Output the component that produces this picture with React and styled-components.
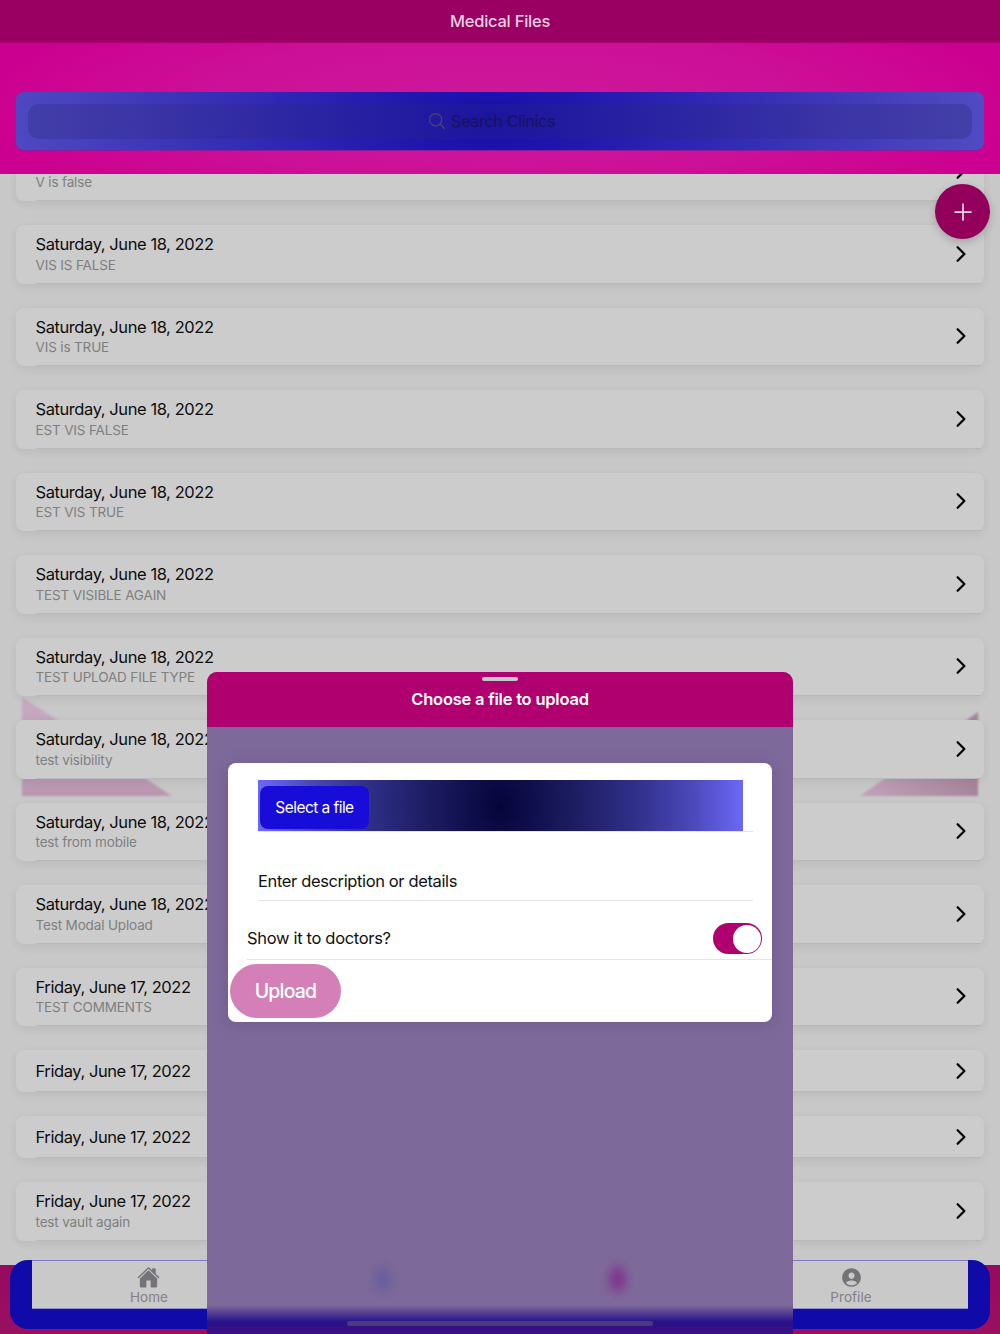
import React from 'react'
import styled, { createGlobalStyle } from 'styled-components'
import { IoChevronForward, IoHome, IoPersonCircle, IoSearchOutline, IoAdd } from 'react-icons/io5'

const GlobalStyle = createGlobalStyle`
  html, body {
    margin: 0;
    padding: 0;
    background: #cbcbcb;
  }
  * {
    box-sizing: border-box;
  }
`

const Page = styled.div`
  position: relative;
  display: flex;
  flex-direction: column;
  width: 1000px;
  height: 1334px;
  overflow: hidden;
  background: #c8c8c8;
  font-family: Inter, "Liberation Sans", sans-serif;
`

const TopBar = styled.div`
  flex: none;
  display: flex;
  align-items: center;
  justify-content: center;
  height: 43px;
  background: #990062;
  border-bottom: 1px solid #a8006c;
  color: #e8cfe0;
  font-size: 16.5px;
  font-weight: 500;
  letter-spacing: -0.25px;
`

const SearchArea = styled.div`
  flex: none;
  position: relative;
  z-index: 2;
  height: 131px;
  padding: 49px 16px 0;
  background: radial-gradient(ellipse 520px 130px at 50% 50%, #cc1a9c 0%, #cc0f97 60%, #cc0090 100%);
`

const SearchBar = styled.div`
  height: 59px;
  padding: 12px;
  border-radius: 8px;
  background: radial-gradient(ellipse 500px 300px at 49% 50%, #160da9 0%, #2a22b2 35%, #3f39b9 70%, #504cc2 100%);
  border-bottom: 1px solid #8a1aa0;
`

const SearchInput = styled.div`
  display: flex;
  align-items: center;
  justify-content: center;
  gap: 4px;
  height: 35px;
  padding: 0 18px 2px 0;
  border-radius: 10px;
  background: radial-gradient(ellipse 490px 300px at 49% 50%, #1c149e 0%, #2a23a2 35%, #3a34a6 70%, #4440a8 100%);
  color: #17125f;
  font-size: 16.5px;
  letter-spacing: -0.5px;

  svg {
    color: #46466f;
    font-size: 20px;
  }
`

const List = styled.div`
  flex: 1;
  position: relative;
  min-height: 0;
  display: flex;
  flex-direction: column;
  gap: 24px;
  padding: 0 16px;
`

const Backdrop = styled.svg`
  position: absolute;
  left: 0;
  top: 0;
  width: 1000px;
  height: 640px;
  filter: blur(0.8px);
`

const Row = styled.div`
  flex: none;
  position: relative;
  display: flex;
  align-items: center;
  justify-content: space-between;
  height: ${p => (p.$sub ? 58.5 : 42)}px;
  padding: 0 11px 1px 19.5px;
  border-radius: 8px;
  background: #cccccc;
  box-shadow: 0 3px 10px rgba(0, 0, 0, 0.07);

  &:first-of-type {
    margin-top: -31.5px;
  }

  &::after {
    content: '';
    position: absolute;
    left: 20px;
    right: 4px;
    bottom: 0;
    height: 1px;
    background: rgba(0, 0, 0, 0.09);
  }

  svg {
    color: #000;
    font-size: 24px;
    stroke-width: 12;
  }
`

const RowText = styled.div`
  display: flex;
  flex-direction: column;
  gap: 1.5px;
`

const RowTitle = styled.div`
  color: #0d0d0d;
  font-size: 16.5px;
  line-height: 20px;
  letter-spacing: -0.42px;
`

const RowSub = styled.div`
  color: #7f7f7f;
  font-size: 13.5px;
  line-height: 18px;
  letter-spacing: -0.15px;
`

const Fab = styled.div`
  position: absolute;
  z-index: 3;
  right: 10px;
  top: 184px;
  display: flex;
  align-items: center;
  justify-content: center;
  width: 55px;
  height: 55px;
  border-radius: 50%;
  background: #93005b;
  color: #e9d3e2;
  font-size: 28px;
  box-shadow: 0 3px 8px rgba(0, 0, 0, 0.2);
`

const TabBar = styled.div`
  flex: none;
  height: 94px;
  margin-top: -20px;
  padding: 20px 10px 0;
  position: relative;
  background: linear-gradient(180deg, transparent 25px, #960a60 25px, #9a1060 100%);
`

const TabBarBlue = styled.div`
  height: 69px;
  padding: 0 22px 20px;
  border-radius: 18px;
  background: #0f0aa8;
`

const TabItems = styled.div`
  display: grid;
  grid-template-columns: repeat(4, 1fr);
  height: 49px;
  background: #c9c9c9;
  border-top: 1px solid #7d78cc;
  border-bottom: 1px solid #8f8bd0;
`

const TabItem = styled.div`
  display: flex;
  flex-direction: column;
  align-items: center;
  padding-top: 5px;
  color: #818185;
  font-size: 13.5px;
  line-height: 17px;
  letter-spacing: 0.05px;

  svg {
    color: #747478;
    font-size: 23px;
    margin-left: ${p => p.$nudge || 0}px;
  }
`

const Sheet = styled.div`
  position: absolute;
  z-index: 4;
  left: 207px;
  top: 672px;
  width: 586px;
  height: 662px;
  display: flex;
  flex-direction: column;
  border-radius: 10px 10px 0 0;
  overflow: hidden;
  background: linear-gradient(180deg, #7e6a9a 0, #7e6a9a 633px, #27108a 650px, #40107f 662px);
`

const SheetHeader = styled.div`
  flex: none;
  position: relative;
  display: flex;
  align-items: center;
  justify-content: center;
  height: 55px;
  padding-bottom: 1px;
  background: #b0006f;
  color: #fff;
  font-size: 16.5px;
  font-weight: 600;
  letter-spacing: -0.22px;
`

const Handle = styled.div`
  position: absolute;
  left: 275px;
  top: 5px;
  width: 36px;
  height: 4px;
  border-radius: 2px;
  background: #c8c8c8;
`

const HomeIndicator = styled.div`
  position: absolute;
  left: 140px;
  bottom: 8px;
  width: 306px;
  height: 5px;
  border-radius: 3px;
  background: #4b3a80;
`

const BlurMark = styled.div`
  position: absolute;
  left: ${p => p.$x}px;
  top: 594px;
  width: 15px;
  height: 26px;
  border-radius: 50%;
  background: ${p => p.$color};
  filter: blur(6px);
`

const Card = styled.div`
  margin: 36px 21px 0;
  height: 259px;
  border-radius: 8px;
  background: #fff;
  box-shadow: 0 2px 16px rgba(60, 40, 100, 0.25);
  display: flex;
  flex-direction: column;
`

const FileField = styled.div`
  margin: 17px 19px 0 30px;
  height: 52px;
  border-bottom: 1px solid #e4e4e4;
`

const FileBar = styled.div`
  display: flex;
  align-items: center;
  width: 485px;
  height: 51px;
  padding: 3px 0 0 2px;
  background: radial-gradient(ellipse 243px 320px at 50% 50%, #05043a 0%, #1c1c62 30%, #2f2f88 55%, #4a47b8 78%, #6c68f6 100%);
`

const FileButton = styled.div`
  display: flex;
  align-items: center;
  justify-content: center;
  width: 109px;
  height: 43px;
  border-radius: 8px;
  background: #180cd8;
  color: #fff;
  font-size: 15.5px;
  letter-spacing: -0.55px;
`

const DescField = styled.div`
  display: flex;
  align-items: flex-end;
  margin: 0 19px 0 30px;
  height: 69px;
  padding-bottom: 9px;
  border-bottom: 1px solid #e4e4e4;
  color: #111;
  font-size: 16.5px;
  letter-spacing: -0.37px;
`

const ToggleRow = styled.div`
  display: flex;
  align-items: flex-end;
  justify-content: space-between;
  height: 59px;
  margin-left: 19px;
  padding: 0 10px 5px 0;
  border-bottom: 1px solid #e4e4e4;
  color: #111;
  font-size: 16.5px;
  letter-spacing: -0.32px;
`

const ToggleLabel = styled.div`
  line-height: 31px;
`

const Toggle = styled.div`
  display: flex;
  justify-content: flex-end;
  align-items: center;
  width: 49px;
  height: 31px;
  padding-right: 1px;
  border-radius: 16px;
  background: #b0006f;

  &::after {
    content: '';
    width: 28px;
    height: 28px;
    border-radius: 50%;
    background: #fff;
  }
`

const UploadButton = styled.div`
  display: flex;
  align-items: center;
  justify-content: center;
  width: 111px;
  height: 54px;
  margin: 4px 0 0 2px;
  border-radius: 27px;
  background: #d47fb7;
  color: #fff;
  font-size: 19.5px;
  font-weight: 500;
  letter-spacing: -0.8px;
`

const rows = [
  { title: 'Saturday, June 18, 2022', sub: 'V is false' },
  { title: 'Saturday, June 18, 2022', sub: 'VIS IS FALSE' },
  { title: 'Saturday, June 18, 2022', sub: 'VIS is TRUE' },
  { title: 'Saturday, June 18, 2022', sub: 'EST VIS FALSE' },
  { title: 'Saturday, June 18, 2022', sub: 'EST VIS TRUE' },
  { title: 'Saturday, June 18, 2022', sub: 'TEST VISIBLE AGAIN' },
  { title: 'Saturday, June 18, 2022', sub: 'TEST UPLOAD FILE TYPE' },
  { title: 'Saturday, June 18, 2022', sub: 'test visibility' },
  { title: 'Saturday, June 18, 2022', sub: 'test from mobile' },
  { title: 'Saturday, June 18, 2022', sub: 'Test Modal Upload' },
  { title: 'Friday, June 17, 2022', sub: 'TEST COMMENTS' },
  { title: 'Friday, June 17, 2022' },
  { title: 'Friday, June 17, 2022' },
  { title: 'Friday, June 17, 2022', sub: 'test vault again' }
]

export default function App() {
  return (
    <Page>
      <GlobalStyle />
      <TopBar>Medical Files</TopBar>
      <SearchArea>
        <SearchBar>
          <SearchInput>
            <IoSearchOutline />
            Search Clinics
          </SearchInput>
        </SearchBar>
      </SearchArea>
      <List>
        <Backdrop viewBox="0 174 1000 640">
          <defs>
            <linearGradient id="leftFade" x1="0" y1="0" x2="0" y2="1">
              <stop offset="0" stopColor="#c8aac2" />
              <stop offset="1" stopColor="#ba96b0" />
            </linearGradient>
            <linearGradient id="rightFade" x1="0" y1="0" x2="1" y2="0">
              <stop offset="0" stopColor="#c2a2b9" />
              <stop offset="1" stopColor="#a6849a" />
            </linearGradient>
          </defs>
          <polygon points="22,697 172,796 22,796" fill="url(#leftFade)" />
          <polygon points="978,712 860,796 978,796" fill="url(#rightFade)" />
        </Backdrop>
        {rows.map((row, index) => (
          <Row key={index} $sub={!!row.sub}>
            <RowText>
              <RowTitle>{row.title}</RowTitle>
              {row.sub && <RowSub>{row.sub}</RowSub>}
            </RowText>
            <IoChevronForward />
          </Row>
        ))}
      </List>
      <Fab>
        <IoAdd />
      </Fab>
      <TabBar>
        <TabBarBlue>
          <TabItems>
            <TabItem $nudge={-1}>
              <IoHome />
              Home
            </TabItem>
            <TabItem />
            <TabItem />
            <TabItem>
              <IoPersonCircle />
              Profile
            </TabItem>
          </TabItems>
        </TabBarBlue>
      </TabBar>
      <Sheet>
        <SheetHeader>
          <Handle />
          Choose a file to upload
        </SheetHeader>
        <Card>
          <FileField>
            <FileBar>
              <FileButton>Select a file</FileButton>
            </FileBar>
          </FileField>
          <DescField>Enter description or details</DescField>
          <ToggleRow>
            <ToggleLabel>Show it to doctors?</ToggleLabel>
            <Toggle />
          </ToggleRow>
          <UploadButton>Upload</UploadButton>
        </Card>
        <BlurMark $x={168} $color="#625c9e" />
        <BlurMark $x={403} $color="#7f2a8c" />
        <HomeIndicator />
      </Sheet>
    </Page>
  )
}
